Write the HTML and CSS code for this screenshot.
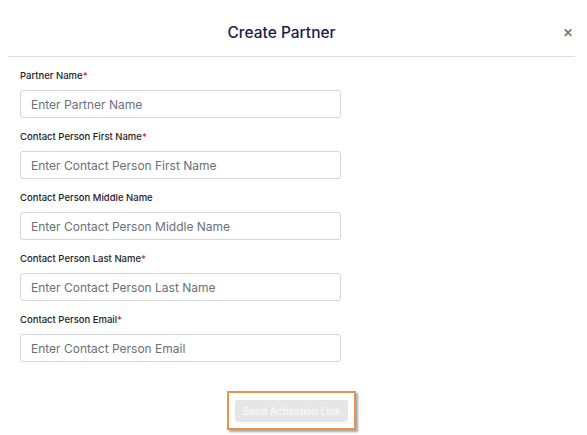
FILE: index.html
```html
<!DOCTYPE html>
<html>
<head>
<meta charset="utf-8">
<link rel="stylesheet" href="styles.css">
</head>
<body>
<div class="modal">
  <div class="header">
    <h1 class="title">Create Partner</h1>
    <span class="close">&#x2715;</span>
  </div>
  <form class="form">
    <div class="field">
      <label class="label">Partner Name<span class="req">*</span></label>
      <input class="input" type="text" placeholder="Enter Partner Name">
    </div>
    <div class="field">
      <label class="label">Contact Person First Name<span class="req">*</span></label>
      <input class="input" type="text" placeholder="Enter Contact Person First Name">
    </div>
    <div class="field">
      <label class="label">Contact Person Middle Name</label>
      <input class="input" type="text" placeholder="Enter Contact Person Middle Name">
    </div>
    <div class="field">
      <label class="label">Contact Person Last Name<span class="req">*</span></label>
      <input class="input" type="text" placeholder="Enter Contact Person Last Name">
    </div>
    <div class="field">
      <label class="label">Contact Person Email<span class="req">*</span></label>
      <input class="input" type="text" placeholder="Enter Contact Person Email">
    </div>
    <div class="actions">
      <div class="highlight">
        <button class="btn" type="button" disabled>Send Activation Link</button>
      </div>
    </div>
  </form>
</div>
</body>
</html>
```

FILE: styles.css
```css
* { box-sizing: border-box; }
html, body { margin: 0; padding: 0; background: #fff; }
body { font-family: Inter, "Noto Sans", sans-serif; }
.modal { width: 587px; height: 435px; background: #fff; }
.header {
  position: relative;
  margin: 0 12px 0 8px;
  height: 57px;
  border-bottom: 1px solid #dedede;
  display: flex;
  justify-content: center;
}
.title {
  margin: 23px 0 0 -20px;
  font-size: 15.5px;
  line-height: 20px;
  font-weight: 500;
  color: #221a4f;
}
.close {
  position: absolute;
  right: 2px;
  top: 25px;
  font-size: 12px;
  font-weight: 700;
  color: #7a7a7a;
}
.form { padding: 12px 0 0 20px; }
.field { display: flex; flex-direction: column; margin-bottom: 12px; }
.label {
  font-size: 9.5px;
  line-height: 14px;
  font-weight: 500;
  color: #1f2228;
  margin-bottom: 7px;
}
.req { color: #e11d2a; }
.input {
  width: 321px;
  height: 28px;
  border: 1px solid #d4d6da;
  border-radius: 3px;
  padding: 0 10px;
  font-family: inherit;
  font-size: 12px;
  color: #333;
  outline: none;
}
.input::placeholder { color: #6b7078; }
.actions { display: flex; padding-left: 207px; margin-top: 29px; }
.highlight {
  border: 2px solid #e8924a;
  padding: 6px 6px;
  box-shadow: 2px 2px 2px rgba(0,0,0,0.35);
}
.btn {
  width: 113px;
  height: 22px;
  border: none;
  border-radius: 3px;
  background: #e6e6e6;
  color: #fafafa;
  font-family: inherit;
  font-size: 10px;
  font-weight: 500;
  padding: 0;
}
```
